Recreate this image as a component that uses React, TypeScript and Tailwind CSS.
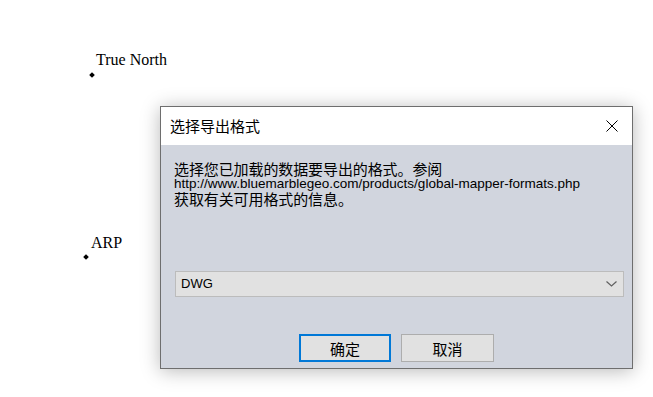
import React from 'react';

const cjk = '"Noto Sans CJK SC", "Liberation Sans", sans-serif';

function Marker({ label, x, y, dotX, dotY }: { label: string; x: number; y: number; dotX: number; dotY: number }) {
  return (
    <>
      <span
        className="absolute text-[16px] leading-none text-black"
        style={{ left: x, top: y, fontFamily: '"Liberation Serif", serif' }}
      >
        {label}
      </span>
      <span
        className="absolute w-[4px] h-[4px] bg-black rotate-45"
        style={{ left: dotX - 2, top: dotY - 2 }}
      />
    </>
  );
}

export default function App() {
  return (
    <div className="relative w-[653px] h-[397px] bg-white overflow-hidden">
      {/* canvas labels */}
      <Marker label="True North" x={96} y={52} dotX={92} dotY={75} />
      <Marker label="ARP" x={91} y={235} dotX={86} dotY={257} />

      {/* export format dialog */}
      <div
        className="absolute left-[160px] top-[106px] w-[473px] h-[263px] border border-[#6e6e6e] flex flex-col shadow-[0_2px_18px_rgba(0,0,0,0.28)]"
        style={{ fontFamily: cjk }}
      >
        {/* Title bar */}
        <div className="h-[38px] bg-white flex items-center justify-between pl-[9px] pr-[14px] pb-[2px]">
          <span className="text-[15px] text-black leading-none">选择导出格式</span>
          <svg width="12" height="12" viewBox="0 0 12 12" className="mt-[2px]">
            <path d="M0.5 0.5 L11.5 11.5 M11.5 0.5 L0.5 11.5" stroke="#000" strokeWidth="1" fill="none" />
          </svg>
        </div>

        {/* Body */}
        <div className="flex-1 bg-[#d1d5de] flex flex-col pt-[16px]">
          <div className="pl-[13px] text-black leading-[15px]">
            <div className="text-[15px] tracking-[-0.1px]">选择您已加载的数据要导出的格式。参阅</div>
            <div className="text-[13.5px]" style={{ fontFamily: '"Liberation Sans", sans-serif' }}>
              http://www.bluemarblegeo.com/products/global-mapper-formats.php
            </div>
            <div className="text-[15px] tracking-[-0.1px]">获取有关可用格式的信息。</div>
          </div>

          <div className="ml-[14px] mt-[65px] w-[449px] h-[26px] bg-[#e1e1e1] border border-[#bcbcbc] flex items-center justify-between pl-[5px] pr-[6px]">
            <span className="text-[13px] text-black" style={{ fontFamily: '"Liberation Sans", sans-serif' }}>
              DWG
            </span>
            <svg width="11" height="6" viewBox="0 0 11 6">
              <path d="M0.5 0.5 L5.5 5 L10.5 0.5" stroke="#606060" strokeWidth="1.2" fill="none" />
            </svg>
          </div>

          <div className="ml-[138px] mt-[37px] flex gap-[10px]">
            <button className="w-[92px] h-[28px] bg-[#e1e1e1] border-2 border-[#0078d7] text-[15px] text-black leading-none">
              确定
            </button>
            <button className="w-[93px] h-[28px] bg-[#e1e1e1] border border-[#adadad] text-[15px] text-black leading-none">
              取消
            </button>
          </div>
        </div>
      </div>
    </div>
  );
}
